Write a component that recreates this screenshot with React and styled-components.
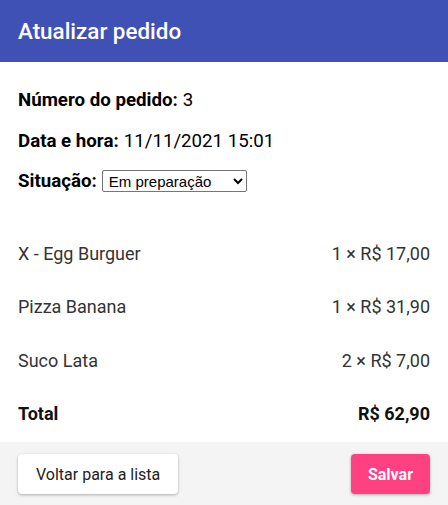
import React from 'react';
import styled, { createGlobalStyle } from 'styled-components';

const GlobalStyle = createGlobalStyle`
  body {
    margin: 0;
    font-family: Roboto, "Liberation Sans", sans-serif;
    background: #fff;
  }
`;

const Page = styled.div`
  width: 448px;
  height: 505px;
  display: flex;
  flex-direction: column;
  overflow: hidden;
`;

const Header = styled.header`
  height: 62px;
  flex-shrink: 0;
  background: #3f51b5;
  color: #fff;
  display: flex;
  align-items: center;
  padding: 0 18px;
  font-size: 22.4px;
  font-weight: 500;
`;

const Body = styled.div`
  flex: 1;
  padding: 18px 18px 0;
`;

const Info = styled.p`
  margin: 0;
  height: 40.5px;
  display: flex;
  align-items: center;
  font-size: 18.7px;
  color: #000;

  b {
    font-weight: 700;
    margin-right: 5px;
  }
`;

const Select = styled.select`
  font-family: Arial, "Liberation Sans", sans-serif;
  font-size: 15px;
  width: 145px;
  height: 22px;
  border: 1px solid #767676;
  border-radius: 2px;
  background: #fff;
  color: #000;
  padding: 0 2px;
`;

const Items = styled.ul`
  list-style: none;
  margin: 25.5px 0 0;
  padding: 0;
`;

const Item = styled.li`
  height: 53.3px;
  display: flex;
  align-items: center;
  justify-content: space-between;
  font-size: 18px;
  color: ${p => (p.$total ? '#111' : '#333')};
  font-weight: ${p => (p.$total ? 700 : 400)};
`;

const Footer = styled.footer`
  height: 63px;
  flex-shrink: 0;
  background: #f4f4f4;
  display: flex;
  align-items: flex-start;
  justify-content: space-between;
  padding: 12px 18px 0;
  box-sizing: border-box;
`;

const Button = styled.button`
  height: 40px;
  padding: 0 ${p => (p.$primary ? '17px' : '18px')};
  border: none;
  border-radius: 4px;
  font-family: Roboto, "Liberation Sans", sans-serif;
  font-size: 16px;
  font-weight: ${p => (p.$primary ? 700 : 400)};
  background: ${p => (p.$primary ? '#ff4081' : '#fff')};
  color: ${p => (p.$primary ? '#fff' : '#222')};
  box-shadow: 0 1px 3px rgba(0, 0, 0, 0.3);
`;

const items = [
  { name: 'X - Egg Burguer', qty: 1, price: '17,00' },
  { name: 'Pizza Banana', qty: 1, price: '31,90' },
  { name: 'Suco Lata', qty: 2, price: '7,00' },
];

export default function App() {
  return (
    <Page>
      <GlobalStyle />
      <Header>Atualizar pedido</Header>
      <Body>
        <Info><b>Número do pedido:</b> 3</Info>
        <Info><b>Data e hora:</b> 11/11/2021 15:01</Info>
        <Info>
          <b>Situação:</b>
          <Select defaultValue="prep">
            <option value="prep">Em preparação</option>
          </Select>
        </Info>
        <Items>
          {items.map(i => (
            <Item key={i.name}>
              <span>{i.name}</span>
              <span>{i.qty} × R$ {i.price}</span>
            </Item>
          ))}
          <Item $total>
            <span>Total</span>
            <span>R$ 62,90</span>
          </Item>
        </Items>
      </Body>
      <Footer>
        <Button>Voltar para a lista</Button>
        <Button $primary>Salvar</Button>
      </Footer>
    </Page>
  );
}
